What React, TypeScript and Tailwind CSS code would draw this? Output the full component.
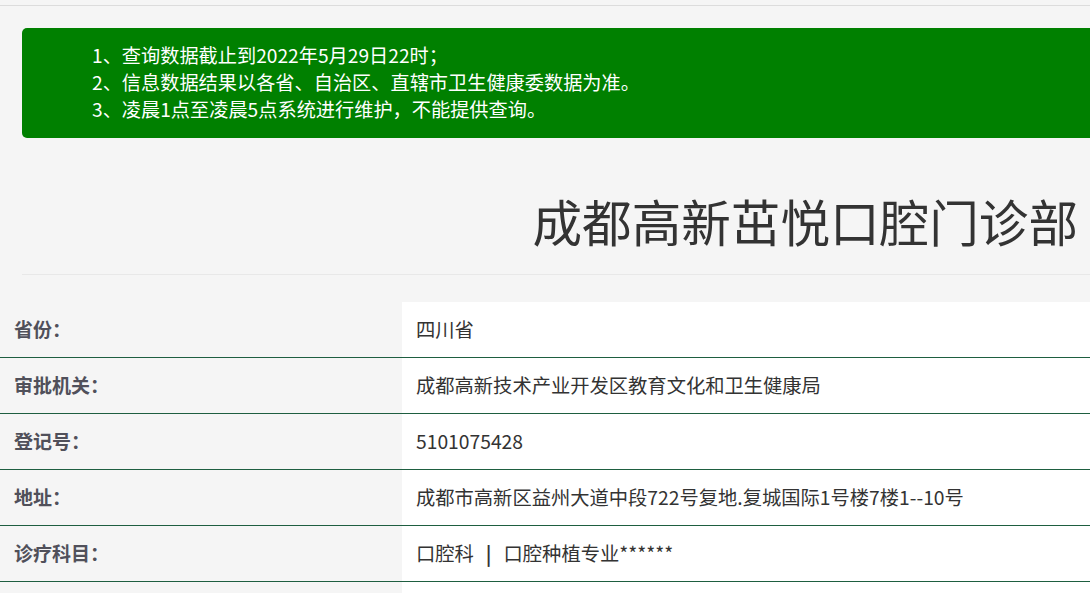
const font = { fontFamily: '"Microsoft YaHei", "Noto Sans CJK SC", "Noto Sans", sans-serif' };

const notices = [
  "1、查询数据截止到2022年5月29日22时；",
  "2、信息数据结果以各省、自治区、直辖市卫生健康委数据为准。",
  "3、凌晨1点至凌晨5点系统进行维护，不能提供查询。",
];

const rows: [string, React.ReactNode][] = [
  ["省份：", "四川省"],
  ["审批机关：", "成都高新技术产业开发区教育文化和卫生健康局"],
  ["登记号：", "5101075428"],
  ["地址：", "成都市高新区益州大道中段722号复地.复城国际1号楼7楼1--10号"],
  [
    "诊疗科目：",
    <>
      口腔科<span className="mx-[12px] font-bold">|</span>口腔种植专业******
    </>,
  ],
];

export default function App() {
  return (
    <main className="min-h-screen w-[1090px] overflow-hidden bg-[#f5f5f5]" style={font}>
      <div className="h-[6px] border-b border-[#dcdcdc]" />

      <div className="pl-[22px] pt-[22px]">
        <div className="rounded-l-[5px] bg-[#008000] pl-[70px] pt-[14px] pb-[15px] text-[19.2px] leading-[27px] text-white">
          {notices.map((line) => (
            <p key={line}>{line}</p>
          ))}
        </div>

        <h1 className="mt-[54px] pr-[12px] text-right text-[49.6px] leading-[56px] font-normal text-[#333]">成都高新茁悦口腔门诊部</h1>
        <div className="mt-[26px] h-px bg-[#e8e8e8]" />
      </div>

      <div className="mt-[27px]">
        {rows.map(([label, value], i) => (
          <div key={i} className="flex h-[56px] border-b border-[#1e5e40]">
            <div className="flex w-[402px] items-center pl-[14px] text-[19px] font-bold text-[#50505a]">{label}</div>
            <div className="flex flex-1 items-center bg-white pl-[14px] text-[19.3px] text-[#333]">{value}</div>
          </div>
        ))}
        <div className="flex h-[20px]">
          <div className="w-[402px]" />
          <div className="flex-1 bg-white" />
        </div>
      </div>
    </main>
  );
}
